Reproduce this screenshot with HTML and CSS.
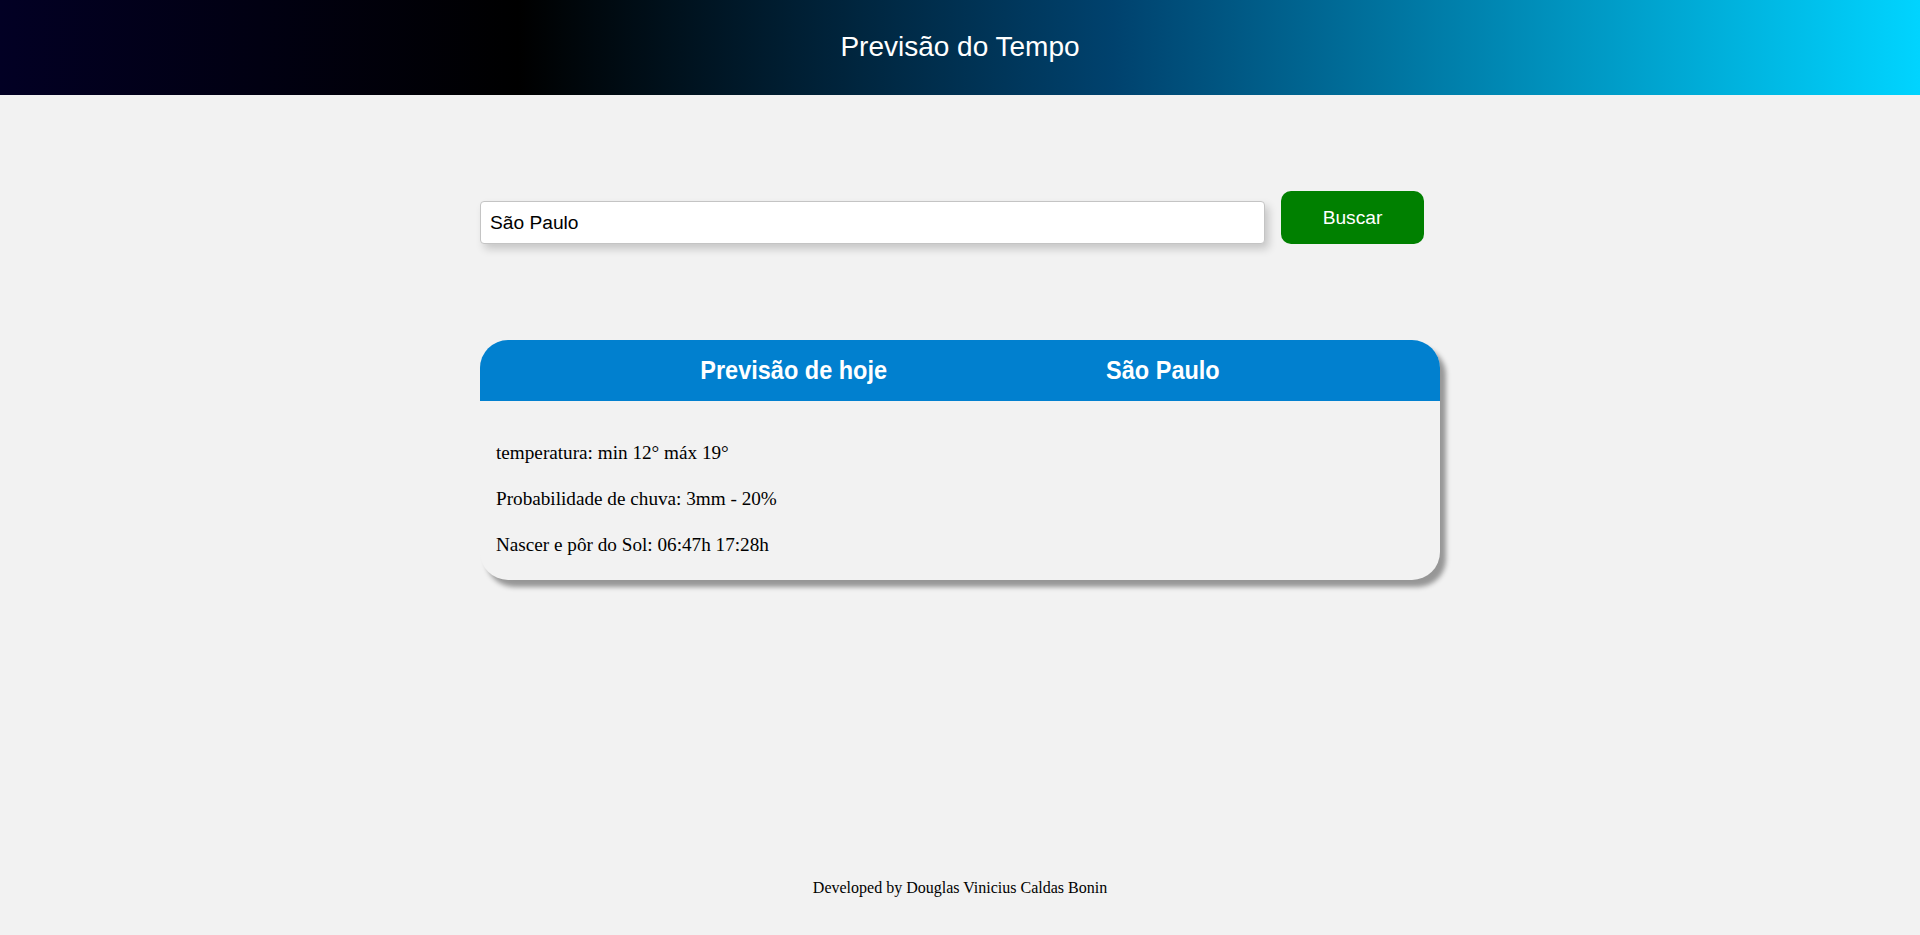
FILE: index.html
```html
<!DOCTYPE html>
<html lang="pt-BR">
<head>
<meta charset="utf-8">
<title>Previsão do Tempo</title>
<link rel="stylesheet" href="styles.css">
</head>
<body>
<div class="page">
  <header class="topbar">
    <h1 class="topbar-title">Previsão do Tempo</h1>
  </header>
  <main class="main">
    <form class="search">
      <input class="search-input" type="text" value="São Paulo">
      <button class="search-btn" type="button">Buscar</button>
    </form>
    <section class="card">
      <div class="card-head">
        <h2 class="card-title">Previsão de hoje</h2>
        <h2 class="card-title">São Paulo</h2>
      </div>
      <div class="card-body">
        <p class="info">temperatura: min 12° máx 19°</p>
        <p class="info">Probabilidade de chuva: 3mm - 20%</p>
        <p class="info">Nascer e pôr do Sol: 06:47h 17:28h</p>
      </div>
    </section>
  </main>
  <footer class="footer">Developed by Douglas Vinicius Caldas Bonin</footer>
</div>
</body>
</html>
```
FILE: styles.css
```css
html, body {
  margin: 0;
  padding: 0;
}
body {
  background: #f2f2f2;
  font-family: "Liberation Serif", "Times New Roman", serif;
  color: #000;
}
.page {
  min-height: 100vh;
  display: flex;
  flex-direction: column;
}
.topbar {
  height: 95px;
  background: linear-gradient(90deg, rgb(2,0,36) 0%, rgb(0,0,0) 27%, rgb(0,66,110) 58%, rgb(0,212,255) 100%);
  display: flex;
  align-items: center;
  justify-content: center;
}
.topbar-title {
  margin: 0;
  font-family: "Liberation Sans", Arial, sans-serif;
  font-weight: normal;
  font-size: 28px;
  color: #fff;
  line-height: 1;
  padding-bottom: 2px;
}
.main {
  width: 960px;
  margin: 0 auto;
  display: flex;
  flex-direction: column;
}
.search {
  margin-top: 96px;
  display: flex;
  align-items: flex-end;
  gap: 16px;
}
.search-input {
  box-sizing: border-box;
  width: 785px;
  height: 43px;
  margin: 0;
  padding: 0 9px;
  border: 1px solid #c4c4c4;
  border-radius: 4px;
  background: #fff;
  font-family: "Liberation Sans", Arial, sans-serif;
  font-size: 19.2px;
  color: #000;
  box-shadow: 4px 5px 8px rgba(0,0,0,0.18);
  outline: none;
}
.search-btn {
  box-sizing: border-box;
  width: 143px;
  height: 53px;
  border: none;
  border-radius: 10px;
  background: #008000;
  color: #fff;
  font-family: "Liberation Sans", Arial, sans-serif;
  font-size: 19.2px;
  padding: 0;
}
.card {
  margin-top: 96px;
  border-radius: 28px;
  background: #f2f2f2;
  box-shadow: 6px 7px 5px rgba(0,0,0,0.38);
  overflow: hidden;
}
.card-head {
  height: 61px;
  background: #0180cf;
  display: flex;
  align-items: center;
  justify-content: center;
  gap: 219px;
}
.card-title {
  margin: 0;
  font-family: "Liberation Sans", Arial, sans-serif;
  font-weight: bold;
  font-size: 23.5px;
  color: #fff;
  transform: scaleY(1.12);
}
.card-body {
  padding: 41px 16px 24px;
  display: flex;
  flex-direction: column;
  gap: 24px;
}
.info {
  margin: 0;
  font-size: 19.2px;
  line-height: 22px;
}
.footer {
  margin-top: auto;
  padding-bottom: 38px;
  text-align: center;
  font-size: 16px;
  line-height: 18px;
}
```
